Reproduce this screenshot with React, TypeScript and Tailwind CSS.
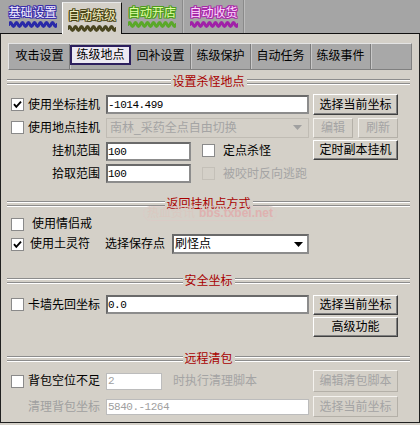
import React from "react";

function Wave({ color }: { color: string }) {
  const w = 48;
  let d = "M0,3.5";
  for (let x = 0; x < w; x += 6) {
    d += ` Q${x + 1.5},-0.5 ${x + 3},3.5 Q${x + 4.5},7.5 ${x + 6},3.5`;
  }
  return (
    <svg width={w} height={7} viewBox={`0 0 ${w} 7`} className="block">
      <path d={d} fill="none" stroke={color} strokeWidth={3} strokeLinecap="round" />
    </svg>
  );
}

function Check({ checked, disabled }: { checked?: boolean; disabled?: boolean }) {
  return (
    <div
      className={
        disabled
          ? "w-[13px] h-[13px] shrink-0 border border-[#c4c0b8] bg-[#d4d0c8]"
          : "w-[13px] h-[13px] shrink-0 border border-[#8a8a8a] bg-white flex items-center justify-center"
      }
    >
      {checked && (
        <svg width="11" height="11" viewBox="0 0 11 11">
          <path d="M2 5.2 L4.3 7.8 L9 2.6" fill="none" stroke="#000" strokeWidth="1.9" />
        </svg>
      )}
    </div>
  );
}

function Btn({ label, cls, disabled }: { label: string; cls: string; disabled?: boolean }) {
  return (
    <div
      className={
        disabled
          ? `${cls} shrink-0 flex items-center justify-center bg-[#d4d0c8] border border-t-[#f4f2ee] border-l-[#f4f2ee] border-b-[#b4b0a8] border-r-[#b4b0a8] text-[#a4a4a4] leading-[14px]`
          : `${cls} shrink-0 flex items-center justify-center bg-[#d4d0c8] border border-t-white border-l-white border-b-[#404040] border-r-[#404040] shadow-[inset_-1px_-1px_0_#808080] text-black leading-[14px]`
      }
    >
      {label}
    </div>
  );
}

function Field({ value, cls, disabled }: { value: string; cls: string; disabled?: boolean }) {
  return (
    <div
      className={
        disabled
          ? `${cls} shrink-0 flex items-center bg-white border border-[#bcbcbc] pl-[1px] font-['Liberation_Mono',monospace] text-[11px] tracking-[-0.5px] text-[#a0a0a0] leading-[12px]`
          : `${cls} shrink-0 flex items-center bg-white border-2 border-t-[#6a6a6a] border-l-[#6a6a6a] border-b-[#8c8c8c] border-r-[#8c8c8c] font-['Liberation_Mono',monospace] text-[11px] tracking-[-0.5px] text-black leading-[12px]`
      }
    >
      {value}
    </div>
  );
}

function Header({ title }: { title: string }) {
  return (
    <div className="h-[14px] flex items-center">
      <div className="flex-1 ml-[-1px] h-[6px] flex flex-col">
        <div className="h-px bg-[#8c8c8c]" />
        <div className="h-px bg-white" />
        <div className="h-[2px]" />
        <div className="h-px bg-[#8c8c8c]" />
        <div className="h-px bg-white" />
      </div>
      <div className="px-[2px] text-[#a80000] leading-[14px] whitespace-nowrap">{title}</div>
      <div className="flex-1 mr-[2px] h-[6px] flex flex-col">
        <div className="h-px bg-[#8c8c8c]" />
        <div className="h-px bg-white" />
        <div className="h-[2px]" />
        <div className="h-px bg-[#8c8c8c]" />
        <div className="h-px bg-white" />
      </div>
    </div>
  );
}

function LeftLabel({ label, check, checked, gray }: { label: string; check?: boolean; checked?: boolean; gray?: boolean }) {
  return (
    <div className="w-[93px] shrink-0 flex items-center">
      {check && (
        <div className="ml-[3px]">
          <Check checked={checked} />
        </div>
      )}
      <div className={gray ? "ml-auto pr-[1px] text-[#a0a0a0] leading-[14px] whitespace-nowrap" : "ml-auto pr-[1px] text-black leading-[14px] whitespace-nowrap"}>
        {label}
      </div>
    </div>
  );
}

const innerTabs = ["攻击设置", "练级地点", "回补设置", "练级保护", "自动任务", "练级事件"];

export default function App() {
  return (
    <div className="w-[420px] h-[425px] bg-[#d4d0c8] relative overflow-hidden font-['Liberation_Sans','Noto_Sans_CJK_SC',sans-serif] text-[12px] text-black">
      {/* top tab strip */}
      <div className="h-[34px] bg-[#a5a5a5] border-b border-[#101010] flex items-end pl-[3px]">
        <div className="w-[59px] h-[33px] flex flex-col items-center pt-[7px]">
          <div className="leading-[13px] text-[#f4f0ff] [text-shadow:1px_0_0_#3a2ea8,-1px_0_0_#3a2ea8,0_1px_0_#3a2ea8,0_-1px_0_#3a2ea8,1px_1px_0_#3a2ea8,-1px_-1px_0_#3a2ea8,1px_-1px_0_#3a2ea8,-1px_1px_0_#3a2ea8]">
            基础设置
          </div>
          <div className="mt-[1px]">
            <Wave color="#2a2aa8" />
          </div>
        </div>
        <div className="w-[60px] h-[32px] mb-[-1px] relative z-10 bg-[#d4d0c8] border-l border-t border-l-white border-t-[#e8e8e8] border-r border-r-[#101010] flex flex-col items-center pt-[7px]">
          <div className="leading-[13px] text-[#f6f0c4] [text-shadow:1px_0_0_#4a4618,-1px_0_0_#4a4618,0_1px_0_#4a4618,0_-1px_0_#4a4618,1px_1px_0_#4a4618,-1px_-1px_0_#4a4618,1px_-1px_0_#4a4618,-1px_1px_0_#4a4618]">
            自动练级
          </div>
          <div className="mt-[2px]">
            <Wave color="#4a4620" />
          </div>
        </div>
        <div className="w-[61px] h-[33px] flex flex-col items-center pt-[7px] border-r border-r-[#8a8a8a]">
          <div className="leading-[13px] text-[#e2ffa4] [text-shadow:1px_0_0_#4c9c1c,-1px_0_0_#4c9c1c,0_1px_0_#4c9c1c,0_-1px_0_#4c9c1c,1px_1px_0_#4c9c1c,-1px_-1px_0_#4c9c1c,1px_-1px_0_#4c9c1c,-1px_1px_0_#4c9c1c]">
            自动开店
          </div>
          <div className="mt-[1px]">
            <Wave color="#5aa82a" />
          </div>
        </div>
        <div className="w-[61px] h-[33px] flex flex-col items-center pt-[7px] border-l border-l-[#bcbcbc] border-r border-r-[#8a8a8a]">
          <div className="leading-[13px] text-[#ffdcff] [text-shadow:1px_0_0_#a82aa8,-1px_0_0_#a82aa8,0_1px_0_#a82aa8,0_-1px_0_#a82aa8,1px_1px_0_#a82aa8,-1px_-1px_0_#a82aa8,1px_-1px_0_#a82aa8,-1px_1px_0_#a82aa8]">
            自动收货
          </div>
          <div className="mt-[1px]">
            <Wave color="#a020a8" />
          </div>
        </div>
        <div className="w-px h-[33px] bg-[#bcbcbc]" />
      </div>

      {/* main panel */}
      <div className="h-[389px] border-l border-r border-b border-[#202020] px-[7px] flex flex-col">
        {/* inner tab bar */}
        <div className="mt-[9px] h-[27px] bg-[#a8a8a8] border border-t-[#e4e4e4] border-l-[#e4e4e4] border-b-[#808080] border-r-[#808080] flex pl-px">
          {innerTabs.map((t, i) =>
            i === 1 ? (
              <div key={t} className="w-[61px] h-[20px] mt-[1px] border-2 border-[#2c1f5e] bg-[#ece9f2] flex items-center justify-center leading-[14px]">
                {t}
              </div>
            ) : (
              <div key={t} className="w-[60px] h-full flex items-center justify-center leading-[14px] border-r border-r-[#7c7c7c] shadow-[1px_0_0_#c8c8c8] pb-[1px]">
                {t}
              </div>
            )
          )}
        </div>

        {/* section 1 */}
        <div className="mt-[5px]">
          <Header title="设置杀怪地点" />
        </div>
        <div className="mt-[5px] h-[21px] flex items-center">
          <LeftLabel label="使用坐标挂机" check checked />
          <Field value="-1014.499" cls="ml-[5px] w-[203px] h-[19px]" />
          <Btn label="选择当前坐标" cls="ml-[4px] w-[85px] h-[21px]" />
        </div>
        <div className="mt-[2px] h-[21px] flex items-center">
          <LeftLabel label="使用地点挂机" check />
          <div className="ml-[5px] w-[203px] h-[20px] shrink-0 flex items-center bg-[#d4d0c8] border border-[#c0bcb4] pl-[3px] text-[#a4a4a4] leading-[14px]">
            <span className="flex-1 whitespace-nowrap">南林_采药全点自由切换</span>
            <svg width="9" height="5" viewBox="0 0 9 5" className="mr-[6px]">
              <path d="M0 0 H9 L4.5 5 Z" fill="#a0a0a0" />
            </svg>
          </div>
          <Btn label="编辑" cls="ml-[4px] w-[40px] h-[20px]" disabled />
          <Btn label="刷新" cls="ml-[5px] w-[40px] h-[20px]" disabled />
        </div>
        <div className="mt-[2px] h-[21px] flex items-center">
          <LeftLabel label="挂机范围" />
          <Field value="100" cls="ml-[5px] w-[85px] h-[19px] mt-[2px]" />
          <div className="ml-[11px]">
            <Check />
          </div>
          <div className="ml-[8px] leading-[14px] whitespace-nowrap">定点杀怪</div>
          <Btn label="定时副本挂机" cls="ml-auto mr-[14px] w-[85px] h-[20px] mb-[1px]" />
        </div>
        <div className="mt-[2px] h-[21px] flex items-center">
          <LeftLabel label="拾取范围" />
          <Field value="100" cls="ml-[5px] w-[85px] h-[19px]" />
          <div className="ml-[11px]">
            <Check disabled />
          </div>
          <div className="ml-[8px] leading-[14px] whitespace-nowrap text-[#a4a4a4]">被咬时反向逃跑</div>
        </div>

        {/* section 2 */}
        <div className="mt-[13px]">
          <Header title="返回挂机点方式" />
        </div>
        <div className="mt-[3px] h-[20px] flex items-center">
          <div className="ml-[3px]">
            <Check />
          </div>
          <div className="ml-[8px] leading-[14px]">使用情侣戒</div>
        </div>
        <div className="h-[20px] flex items-center">
          <div className="ml-[3px]">
            <Check checked />
          </div>
          <div className="ml-[6px] leading-[14px]">使用土灵符</div>
          <div className="ml-[15px] leading-[14px]">选择保存点</div>
          <div className="ml-[7px] w-[137px] h-[20px] shrink-0 flex items-center bg-white border-2 border-t-[#6a6a6a] border-l-[#6a6a6a] border-b-[#8c8c8c] border-r-[#8c8c8c] pl-[1px] leading-[14px]">
            <span className="flex-1">刷怪点</span>
            <svg width="9" height="5" viewBox="0 0 9 5" className="mr-[4px]">
              <path d="M0 0 H9 L4.5 5 Z" fill="#000" />
            </svg>
          </div>
        </div>

        {/* section 3 */}
        <div className="mt-[20px]">
          <Header title="安全坐标" />
        </div>
        <div className="mt-[6px] h-[21px] flex items-center">
          <LeftLabel label="卡墙先回坐标" check />
          <Field value="0.0" cls="ml-[5px] w-[203px] h-[19px]" />
          <Btn label="选择当前坐标" cls="ml-[4px] w-[85px] h-[20px]" />
        </div>
        <div className="mt-[2px] h-[20px] flex items-center">
          <Btn label="高级功能" cls="ml-[305px] w-[85px] h-[20px]" />
        </div>

        {/* section 4 */}
        <div className="mt-[15px]">
          <Header title="远程清包" />
        </div>
        <div className="mt-[4px] h-[22px] flex items-center">
          <LeftLabel label="背包空位不足" check />
          <Field value="2" cls="ml-[5px] w-[56px] h-[17px]" disabled />
          <div className="ml-[11px] leading-[14px] whitespace-nowrap text-[#a4a4a4]">时执行清理脚本</div>
          <Btn label="编辑清包脚本" cls="ml-auto mr-[14px] w-[85px] h-[22px]" disabled />
        </div>
        <div className="mt-[4px] h-[21px] flex items-center">
          <LeftLabel label="清理背包坐标" gray />
          <Field value="5840.-1264" cls="ml-[5px] w-[203px] h-[16px]" disabled />
          <Btn label="选择当前坐标" cls="ml-[4px] w-[85px] h-[21px]" disabled />
        </div>
      </div>

      {/* watermark overlay */}
      <div className="absolute left-[143px] top-[206px] w-[134px] h-[15px] rounded-full border border-[#dccac6] flex items-center justify-center gap-[4px] opacity-75 leading-[13px] whitespace-nowrap">
        <span className="text-[#dcc6be] text-[12px]">热血资讯</span>
        <span className="text-[#e2a8a8] text-[12px] font-bold font-['Liberation_Sans',sans-serif]">bbs.txbei.net</span>
      </div>
    </div>
  );
}
